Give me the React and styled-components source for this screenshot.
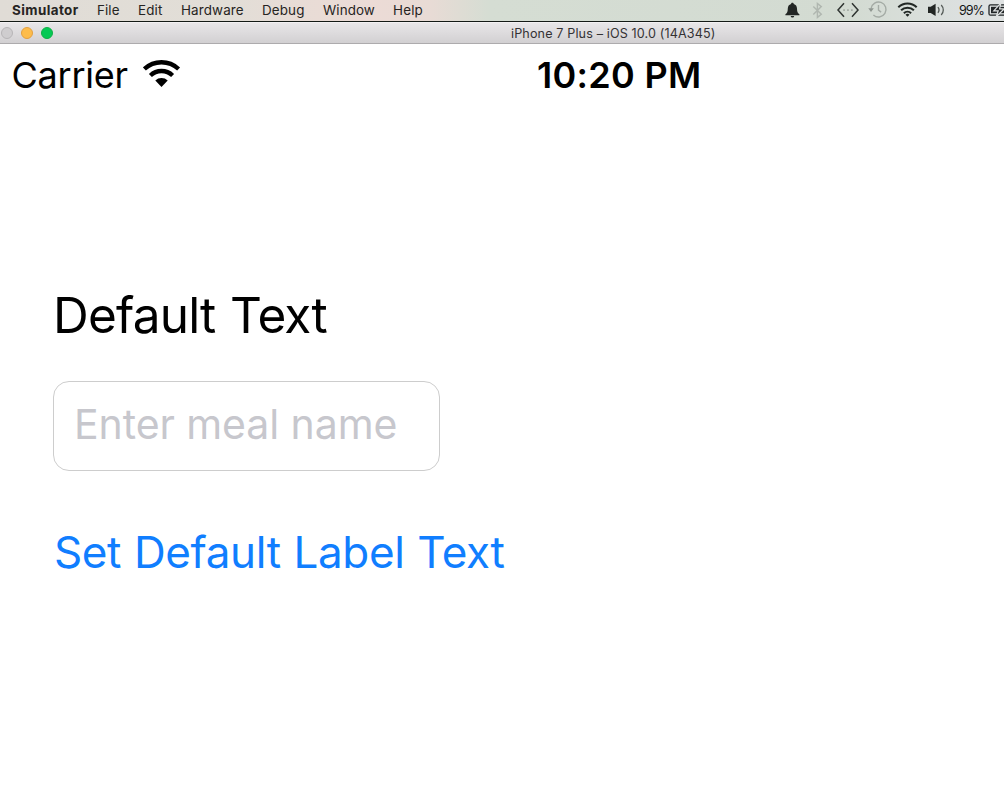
import React from "react";
import styled, { createGlobalStyle } from "styled-components";

const GlobalStyle = createGlobalStyle`
  * { box-sizing: border-box; }
  html, body { margin: 0; background: #fff; overflow: hidden; }
  body { font-family: Inter, "Liberation Sans", sans-serif; color: #000; }
`;

const Desktop = styled.div`
  width: 1004px;
  height: 803px;
  display: flex;
  flex-direction: column;
  overflow: hidden;
  background: #fff;
`;

const MenuBar = styled.header`
  flex: none;
  height: 22px;
  display: flex;
  justify-content: space-between;
  border-bottom: 1px solid #141a16;
  background: linear-gradient(90deg, #e0dcd6 0, #e2ded7 230px, #e8dcd6 300px, #ecdbd6 370px, #e8dbd5 430px, #d5ddd3 490px, #d3dbd2 850px, #dce0df 960px, #dfe2e2 1004px);
`;

const Menus = styled.nav`
  display: grid;
  grid-template-columns: 85px 41px 43px 81px 61px 70px 40px;
  padding-left: 12px;
`;

const MenuItem = styled.span`
  font-size: 13.4px;
  line-height: 21px;
  white-space: nowrap;
  color: #262422;
  font-weight: ${(p) => (p.$app ? 700 : 400)};
  letter-spacing: ${(p) => p.$track || 0}px;
`;

const StatusItems = styled.div`
  display: flex;
  align-items: flex-start;
  width: 219px;
  color: #222624;
  svg { flex: none; display: block; }
`;

const Percent = styled.span`
  width: 29px;
  font-size: 12.6px;
  line-height: 21px;
  letter-spacing: -1.05px;
  color: #141616;
`;

const TitleBar = styled.div`
  flex: none;
  height: 22px;
  display: flex;
  align-items: center;
  border-top: 1px solid #f3f1f3;
  border-bottom: 1px solid #adabad;
  background: linear-gradient(#e8e6e8, #d2d0d2);
`;

const Lights = styled.div`
  width: 511px;
  display: flex;
  gap: 8px;
  padding-left: 1px;
`;

const Light = styled.i`
  width: 12px;
  height: 12px;
  border-radius: 50%;
  border: 1px solid ${(p) => p.$edge};
  background: ${(p) => p.$fill};
`;

const WindowTitle = styled.span`
  padding-top: 2px;
  font-size: 12.6px;
  line-height: 20px;
  letter-spacing: 0.13px;
  color: #343234;
  white-space: nowrap;
`;

const Screen = styled.main`
  flex: 1;
  display: flex;
  flex-direction: column;
  align-items: flex-start;
`;

const PhoneStatus = styled.div`
  width: 100%;
  height: 62px;
  display: flex;
  align-items: center;
  padding-left: 11px;
`;

const Carrier = styled.span`
  width: 132px;
  padding-left: 0.5px;
  font-size: 36px;
  line-height: 62px;
  letter-spacing: -0.25px;
`;

const Clock = styled.span`
  margin-left: 356px;
  font-size: 36px;
  font-weight: 600;
  line-height: 62px;
  letter-spacing: 0.3px;
  white-space: nowrap;
`;

const Form = styled.section`
  display: flex;
  flex-direction: column;
  align-items: flex-start;
  padding: 179px 0 0 53px;
`;

const Label = styled.label`
  font-size: 49.5px;
  line-height: 60px;
  letter-spacing: -0.8px;
  word-spacing: 1.5px;
  white-space: nowrap;
`;

const Field = styled.input`
  width: 387px;
  height: 90px;
  margin-top: 36px;
  padding: 0 0 4px 20px;
  border: 1px solid #cdcdcd;
  border-radius: 16px;
  outline: none;
  background: #fff;
  font: 41px Inter, "Liberation Sans", sans-serif;
  letter-spacing: -0.08px;
  &::placeholder { color: #c7c7cd; opacity: 1; }
`;

const SetButton = styled.button`
  margin-top: 51px;
  padding: 0 0 0 1px;
  border: 0;
  background: none;
  font: 44px/60px Inter, "Liberation Sans", sans-serif;
  letter-spacing: -0.38px;
  word-spacing: 0.8px;
  color: #107eff;
  white-space: nowrap;
`;

const MenuIcons = () => (
  <svg width="174" height="21" viewBox="785 0 174 21" fill="none">
    <path fill="#222624" d="M792.4 2.800c.9 0 1.300.5 1.300 1.100 2.200.6 3.200 2.200 3.300 4.500.1 2.900.4 4.200 2.400 5.800v1h-14v-1c2-1.600 2.300-2.900 2.400-5.800.1-2.300 1.100-3.900 3.300-4.500 0-.6.4-1.100 1.300-1.100zM790.700 15.900h3.500c-.2 1.100-.8 1.700-1.700 1.700s-1.600-.6-1.800-1.700z" />
    <path stroke="#b0b7b0" strokeWidth="1.400" d="M813.300 6.400l8 7.800-3.900 3.200V3.400l3.900 3.200-8 7.800" />
    <path stroke="#303532" strokeWidth="1.500" d="M844 3.300l-6 6.700 6 6.700M852 3.300l6 6.700-6 6.700" />
    <path fill="#a3aaa4" d="M843.200 9.200h1.700v1.700h-1.700zM847.100 9.200h1.700v1.700h-1.700zM851 9.200h1.700v1.700H851z" />
    <path stroke="#a4aba5" strokeWidth="1.400" d="M871.100 8.500a7.500 7.500 0 1 1 2.300 6.500M878.500 5v5.100l2.600 2" />
    <path fill="#8f9690" d="M868.300 8.200h5.500l-2.800 3.900z" />
    <g stroke="#222825" strokeWidth="2">
      <path d="M898.300 7.300a13 13 0 0 1 18.400 0" />
      <path d="M901.100 10.300a9 9 0 0 1 12.800 0" />
      <path d="M903.900 13.200a5.100 5.100 0 0 1 7.200 0" />
    </g>
    <path fill="#222825" d="M905.500 14.800a2.900 2.900 0 0 1 4 0l-2 2z" />
    <path fill="#222624" d="M928 6.800h2.700l4.900-3v12.200l-4.900-3H928z" />
    <path stroke="#555b58" strokeWidth="1.300" d="M937.900 7.200c1.300 1.600 1.300 4 0 5.600M941.200 5c2.800 2.900 2.800 7.100 0 10" />
  </svg>
);

const Battery = () => (
  <svg width="16" height="21" viewBox="988 0 16 21" fill="none">
    <path stroke="#202426" strokeWidth="1.300" d="M1004 4.800h-13.500q-1.500 0-1.500 1.500v7.400q0 1.500 1.500 1.500H1004" />
    <path fill="#202426" d="M991 6.800h13v6.400h-13z" />
    <path fill="#202426" stroke="#dfe2e2" strokeWidth="1.200" d="M1000.800 3.200l-7 7.600h4.400l-2 6 8.200-8h-4.800z" />
  </svg>
);

const WifiIcon = () => (
  <svg width="38" height="62" viewBox="143 44 38 62" fill="none">
    <g stroke="#000" strokeWidth="4.300">
      <path d="M144.400 69a25 25 0 0 1 34.200 0" />
      <path d="M150.400 75.500a16 16 0 0 1 22.200 0" />
    </g>
    <path fill="#000" d="M155.300 80.600a9 9 0 0 1 12.400 0l-6.200 6.500z" />
  </svg>
);

const menus = [
  ["Simulator", 0.42],
  ["File", 0.1],
  ["Edit", 0.15],
  ["Hardware", 0.15],
  ["Debug", 0.15],
  ["Window", 0.1],
  ["Help", 0.2],
];

export default function App() {
  return (
    <Desktop>
      <GlobalStyle />
      <MenuBar>
        <Menus>
          {menus.map(([name, track], i) => (
            <MenuItem key={name} $app={i === 0} $track={track}>{name}</MenuItem>
          ))}
        </Menus>
        <StatusItems>
          <MenuIcons />
          <Percent>99%</Percent>
          <Battery />
        </StatusItems>
      </MenuBar>
      <TitleBar>
        <Lights>
          <Light $fill="#cfcdcf" $edge="#b7b5b7" />
          <Light $fill="#fdbc4b" $edge="#e3a040" />
          <Light $fill="#06c955" $edge="#10b045" />
        </Lights>
        <WindowTitle>iPhone 7 Plus – iOS 10.0 (14A345)</WindowTitle>
      </TitleBar>
      <Screen>
        <PhoneStatus>
          <Carrier>Carrier</Carrier>
          <WifiIcon />
          <Clock>10:20 PM</Clock>
        </PhoneStatus>
        <Form>
          <Label htmlFor="meal">Default Text</Label>
          <Field id="meal" placeholder="Enter meal name" />
          <SetButton type="button">Set Default Label Text</SetButton>
        </Form>
      </Screen>
    </Desktop>
  );
}
